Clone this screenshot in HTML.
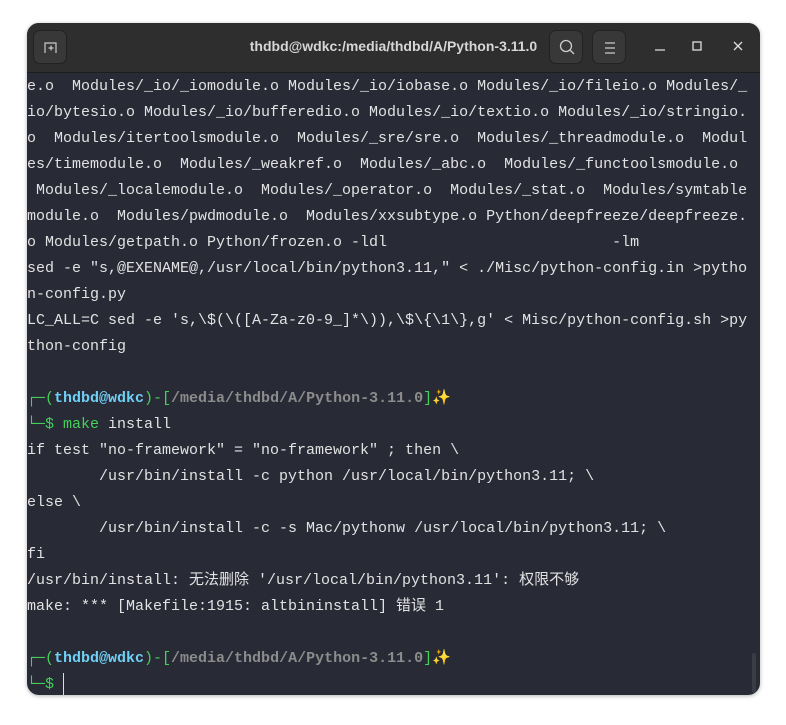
<!DOCTYPE html>
<html><head><meta charset="utf-8"><style>
html,body{margin:0;padding:0;width:786px;height:725px;background:#fff;overflow:hidden}
.win{position:absolute;left:27px;top:23px;width:733px;height:672px;border-radius:12px;overflow:hidden;background:#282a36;box-shadow:0 1px 4px rgba(0,0,0,.3)}
.tb{position:absolute;left:0;top:0;width:733px;height:49px;background:#2e2e2e;border-bottom:1px solid #1e1e1e}
.btn{position:absolute;top:7px;width:34px;height:34px;border-radius:7px;background:#383838;border:1px solid #222;box-sizing:border-box}
.title{position:absolute;left:0;width:733px;top:15px;text-align:center;font:bold 14px "Liberation Sans",sans-serif;color:#d6d6d6}
.term{position:absolute;left:0;top:51px;width:733px;font:15px "Liberation Mono","Noto Sans CJK SC",monospace;color:#e2e2e2}
.l{height:26px;line-height:26px;white-space:pre}
.g{color:#45d05a}.c{color:#6fd0f6;font-weight:bold}.p{color:#8c8c8c;font-weight:bold}
</style></head><body>
<div class="win">
<div class="tb">
<div class="btn" style="left:6px"><svg width="34" height="34" viewBox="0 0 34 34"><path d="M11 22V12h11v10M14.5 17h5M17 14.5v5" stroke="#ccc" stroke-width="1.2" fill="none"/></svg></div>
<div class="title">thdbd@wdkc:/media/thdbd/A/Python-3.11.0</div>
<div class="btn" style="left:522px"><svg width="34" height="34" viewBox="0 0 34 34"><circle cx="16" cy="15" r="5.5" stroke="#ccc" stroke-width="1.3" fill="none"/><path d="M20 19l4 4" stroke="#ccc" stroke-width="1.3"/></svg></div>
<div class="btn" style="left:565px"><svg width="34" height="34" viewBox="0 0 34 34"><path d="M12 12h10M12 17h10M12 22h10" stroke="#ccc" stroke-width="1.2"/></svg></div>
<svg style="position:absolute;left:620px;top:15px" width="110" height="20"><path d="M8 12h10" stroke="#ddd" stroke-width="1.3"/><rect x="46" y="4" width="8" height="8" stroke="#ddd" stroke-width="1.3" fill="none"/><path d="M87 4l8 8M95 4l-8 8" stroke="#ddd" stroke-width="1.3"/></svg>
</div>
<div class="term"><div class="l">e.o  Modules/_io/_iomodule.o Modules/_io/iobase.o Modules/_io/fileio.o Modules/_</div><div class="l">io/bytesio.o Modules/_io/bufferedio.o Modules/_io/textio.o Modules/_io/stringio.</div><div class="l">o  Modules/itertoolsmodule.o  Modules/_sre/sre.o  Modules/_threadmodule.o  Modul</div><div class="l">es/timemodule.o  Modules/_weakref.o  Modules/_abc.o  Modules/_functoolsmodule.o</div><div class="l"> Modules/_localemodule.o  Modules/_operator.o  Modules/_stat.o  Modules/symtable</div><div class="l">module.o  Modules/pwdmodule.o  Modules/xxsubtype.o Python/deepfreeze/deepfreeze.</div><div class="l">o Modules/getpath.o Python/frozen.o -ldl                         -lm</div><div class="l">sed -e "s,@EXENAME@,/usr/local/bin/python3.11," &lt; ./Misc/python-config.in &gt;pytho</div><div class="l">n-config.py</div><div class="l">LC_ALL=C sed -e 's,\$(\([A-Za-z0-9_]*\)),\$\{\1\},g' &lt; Misc/python-config.sh &gt;py</div><div class="l">thon-config</div><div class="l"> </div><div class="l"><span class="g">┌─(</span><span class="c">thdbd@wdkc</span><span class="g">)-[</span><span class="p">/media/thdbd/A/Python-3.11.0</span><span class="g">]</span>✨</div><div class="l"><span class="g">└─$ make</span> install</div><div class="l">if test "no-framework" = "no-framework" ; then \</div><div class="l">        /usr/bin/install -c python /usr/local/bin/python3.11; \</div><div class="l">else \</div><div class="l">        /usr/bin/install -c -s Mac/pythonw /usr/local/bin/python3.11; \</div><div class="l">fi</div><div class="l">/usr/bin/install: 无法删除 '/usr/local/bin/python3.11': 权限不够</div><div class="l">make: *** [Makefile:1915: altbininstall] 错误 1</div><div class="l"> </div><div class="l"><span class="g">┌─(</span><span class="c">thdbd@wdkc</span><span class="g">)-[</span><span class="p">/media/thdbd/A/Python-3.11.0</span><span class="g">]</span>✨</div><div class="l"><span class="g">└─$</span> <span style="display:inline-block;width:1px;height:22px;background:#ddd;vertical-align:middle"></span></div></div>
<div style="position:absolute;left:725px;top:630px;width:4px;height:40px;border-radius:2px;background:#3a3c46"></div>
</div>
</body></html>
